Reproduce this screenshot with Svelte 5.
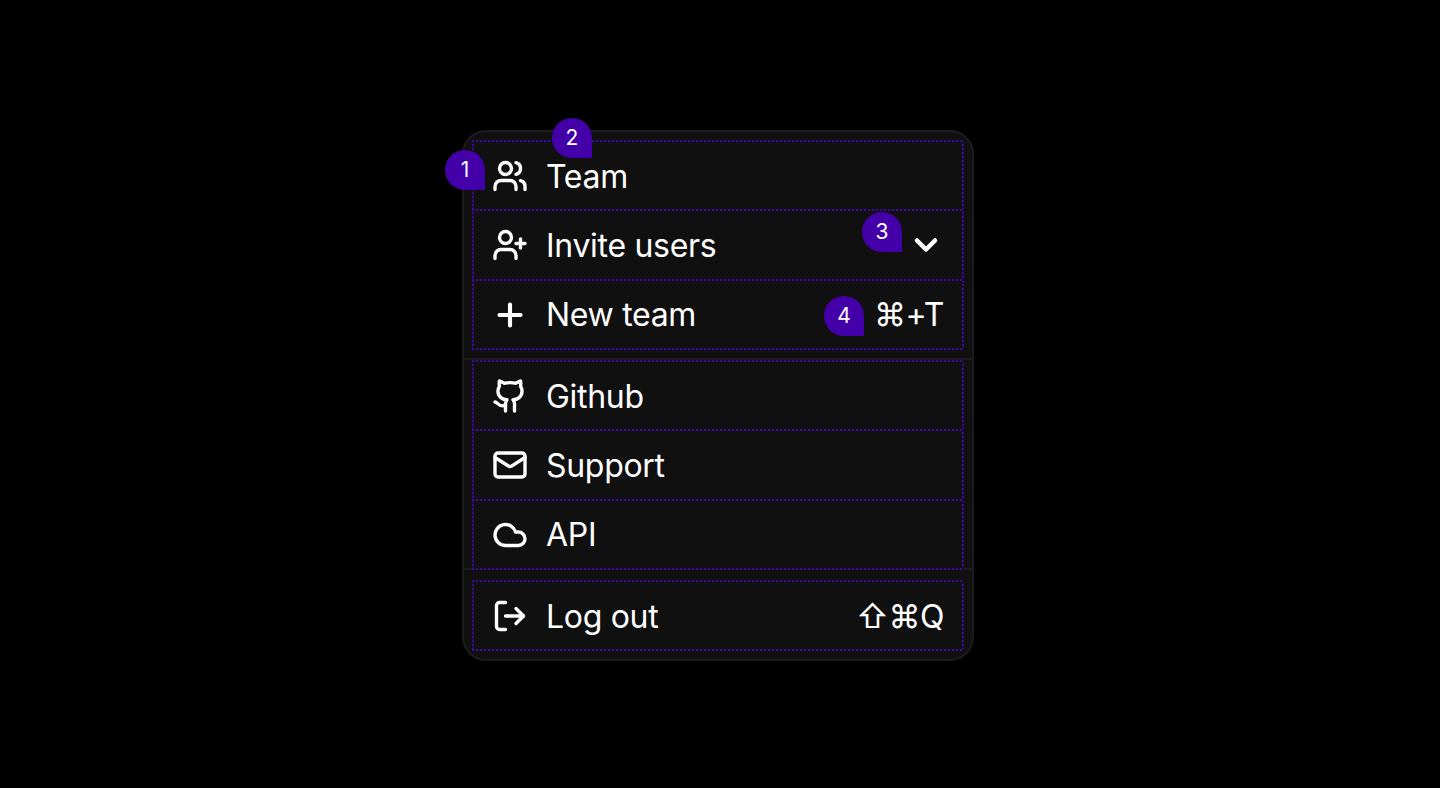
<script>
  const groups = [
    { cls: 'first', rows: [
      { label: 'Team', icon: 'users', badges: [{ n: 1, cls: 'b1' }, { n: 2, cls: 'b2' }] },
      { label: 'Invite users', icon: 'userplus', chevron: true, badges: [{ n: 3, cls: 'b3' }] },
      { label: 'New team', icon: 'plus', kbd: '⌘+T', badges: [{ n: 4, cls: 'b4' }] }
    ]},
    { cls: 'middle', rows: [
      { label: 'Github', icon: 'github' },
      { label: 'Support', icon: 'mail' },
      { label: 'API', icon: 'cloud' }
    ]},
    { cls: 'last', rows: [
      { label: 'Log out', icon: 'logout', kbd: '⇧⌘Q' }
    ]}
  ];
</script>

<main class="page">
  <div class="card">
    {#each groups as group, g}
      {#if g > 0}<div class="divider"></div>{/if}
      <section class="wrap {group.cls}">
        <div class="group">
          {#each group.rows as row}
            <div class="row">
              <svg class="icon {row.icon}" viewBox="0 0 24 24" aria-hidden="true">
                {#if row.icon === 'users'}
                  <path d="M16 21v-2a4 4 0 0 0-4-4H6a4 4 0 0 0-4 4v2" /><circle cx="9" cy="7" r="4" /><path d="M22 21v-2a4 4 0 0 0-3-3.87" /><path d="M16 3.13a4 4 0 0 1 0 7.75" />
                {:else if row.icon === 'userplus'}
                  <path d="M16 21v-2a4 4 0 0 0-4-4H6a4 4 0 0 0-4 4v2" /><circle cx="9" cy="7" r="4" /><line x1="19" x2="19" y1="8" y2="14" /><line x1="22" x2="16" y1="11" y2="11" />
                {:else if row.icon === 'plus'}
                  <path d="M5 12h14" /><path d="M12 5v14" />
                {:else if row.icon === 'github'}
                  <path d="M15 22v-4a4.8 4.8 0 0 0-1-3.5c3 0 6-2 6-5.5.08-1.25-.27-2.48-1-3.5.28-1.15.28-2.35 0-3.5 0 0-1 0-3 1.5-2.64-.5-5.36-.5-8 0C6 2 5 2 5 2c-.3 1.15-.3 2.35 0 3.5A5.403 5.403 0 0 0 4 9c0 3.5 3 5.5 6 5.5-.39.49-.68 1.05-.85 1.65-.17.6-.22 1.23-.15 1.85v4" /><path d="M9 18c-4.51 2-5-2-7-2" />
                {:else if row.icon === 'mail'}
                  <rect width="20" height="16" x="2" y="4" rx="2" /><path d="m22 7-8.97 5.7a1.94 1.94 0 0 1-2.06 0L2 7" />
                {:else if row.icon === 'cloud'}
                  <path d="M17.5 19H9a7 7 0 1 1 6.71-9h1.79a4.5 4.5 0 1 1 0 9Z" />
                {:else if row.icon === 'logout'}
                  <path d="M9 21H5a2 2 0 0 1-2-2V5a2 2 0 0 1 2-2h4" /><polyline points="16 17 21 12 16 7" /><line x1="21" x2="9" y1="12" y2="12" />
                {/if}
              </svg>
              <span class="label">{row.label}</span>
              {#if row.chevron}
                <svg class="icon chevron" viewBox="0 0 24 24" aria-hidden="true"><path d="m6 9 6 6 6-6" /></svg>
              {/if}
              {#if row.kbd}<span class="kbd">{row.kbd}</span>{/if}
              {#each row.badges ?? [] as badge}
                <span class="badge {badge.cls}">{badge.n}</span>
              {/each}
            </div>
          {/each}
        </div>
      </section>
    {/each}
  </div>
</main>

<style>
  :global(body) {
    margin: 0;
    background: #000;
  }
  .page {
    --dots-h: repeating-linear-gradient(90deg, #3e0a94 0 2px, #1a0d35 2px 4px);
    --dots-v: repeating-linear-gradient(180deg, #3e0a94 0 2px, #1a0d35 2px 4px);
    min-height: 788px;
    box-sizing: border-box;
    padding: 130px 0 0 462px;
    font-family: Inter, "Liberation Sans", sans-serif;
    color: #fff;
  }
  .card {
    width: 512px;
    box-sizing: border-box;
    background: #101011;
    border: 2px solid #1c1c1e;
    border-radius: 24px;
  }
  .wrap {
    position: relative;
    z-index: 1;
    padding: 0 8px;
  }
  .wrap.first {
    padding-top: 8px;
    padding-bottom: 8px;
  }
  .wrap.last {
    padding-top: 10px;
    padding-bottom: 8px;
  }
  .divider {
    height: 2px;
    background: #1c1c1e;
  }
  .middle + .divider {
    margin-top: -2px;
  }
  .group {
    padding: 0 2px 2px;
    background:
      var(--dots-h) left bottom / 100% 2px no-repeat,
      var(--dots-v) left top / 2px 100% no-repeat,
      var(--dots-v) right top / 2px 100% no-repeat;
  }
  .row {
    position: relative;
    box-sizing: border-box;
    display: flex;
    align-items: center;
    gap: 18px;
    height: 69.33px;
    padding: 4px 20px 0;
    margin: 0 -2px;
    background: var(--dots-h) left top / 100% 2px no-repeat;
  }
  .icon {
    flex: none;
    width: 36px;
    height: 36px;
    margin-bottom: 1px;
    fill: none;
    stroke: #fff;
    stroke-width: 2.25;
    stroke-linecap: round;
    stroke-linejoin: round;
  }
  .plus {
    stroke-width: 2.75;
  }
  .chevron {
    margin-left: auto;
    stroke-width: 3;
  }
  .label {
    font-size: 32px;
    line-height: 40px;
    letter-spacing: -0.3px;
    font-weight: 420;
  }
  .kbd {
    margin-left: auto;
    font-size: 32px;
    line-height: 40px;
    letter-spacing: -0.5px;
    font-weight: 420;
  }
  .badge {
    position: absolute;
    width: 40px;
    height: 40px;
    display: flex;
    align-items: center;
    justify-content: center;
    border-radius: 50% 50% 0 50%;
    background: #4400a8;
    font-size: 21px;
    line-height: 24px;
    font-weight: 400;
    color: #fff;
  }
  .b1 { left: -27px; top: 10px; }
  .b2 { left: 80px; top: -22px; }
  .b3 { left: 390px; top: 3px; }
  .b4 { left: 352px; top: 17px; }
</style>
